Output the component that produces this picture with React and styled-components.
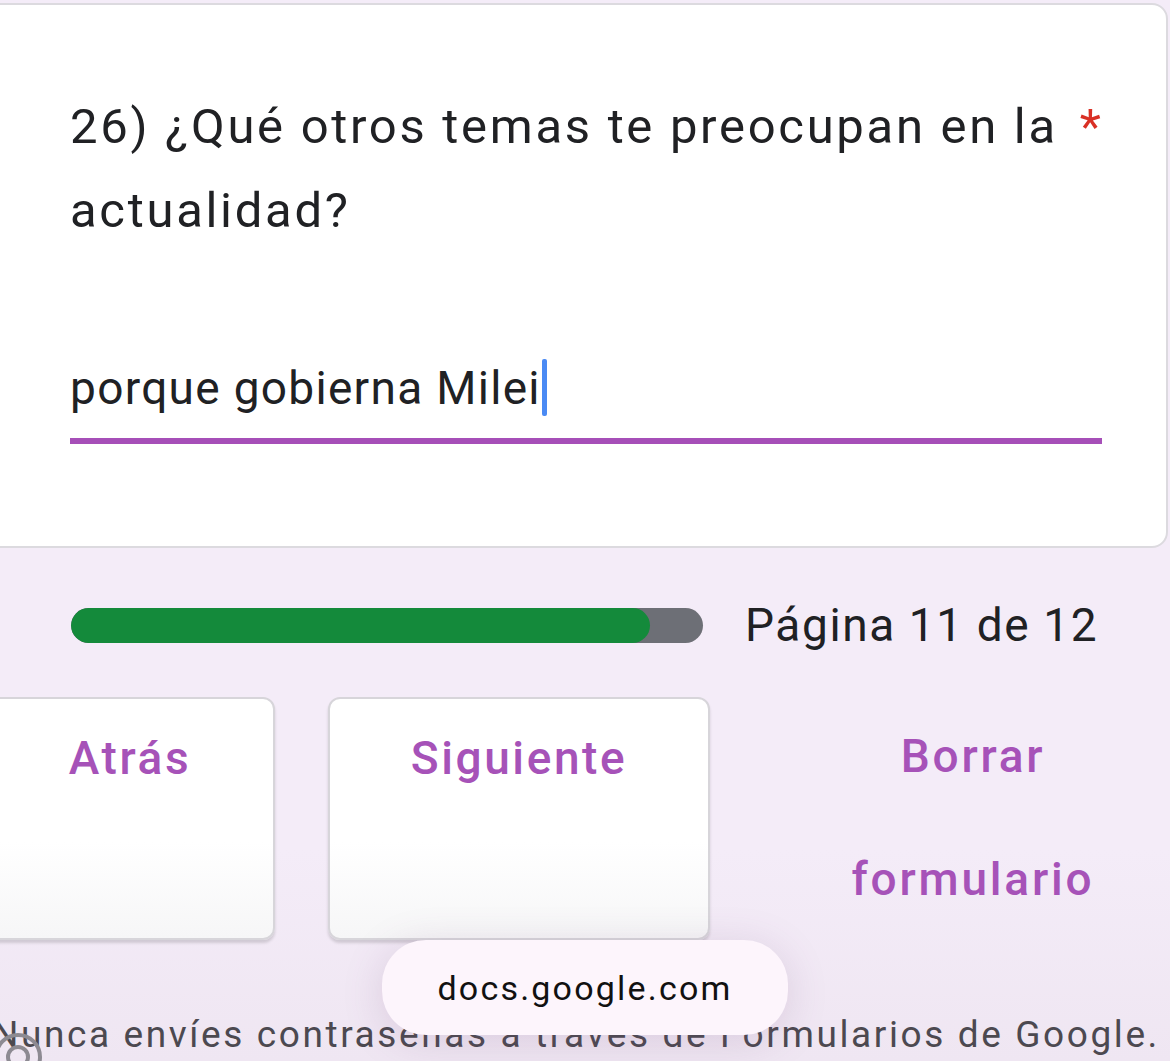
import styled, { createGlobalStyle } from "styled-components"

const GlobalStyle = createGlobalStyle`
  html, body {
    margin: 0;
    padding: 0;
  }
  body {
    font-family: Roboto, "Noto Sans", Arial, sans-serif;
  }
`

function App() {
  const current = 11
  const total = 12
  const done = (current / total) * 100

  return (
    <Page>
      <GlobalStyle />
      <Card>
        <Question>
          26) ¿Qué otros temas te preocupan en la<Required>*</Required>
          <br />
          actualidad?
        </Question>
        <Answer>
          <AnswerText>porque gobierna Milei</AnswerText>
          <Caret />
        </Answer>
      </Card>

      <ProgressRow>
        <Track>
          <Fill style={{ width: `${done}%` }} />
        </Track>
        <PageLabel>Página {current} de {total}</PageLabel>
      </ProgressRow>

      <Buttons>
        <NavButton $width={290}>Atrás</NavButton>
        <NavButton $width={382}>Siguiente</NavButton>
        <ClearButton>
          Borrar
          <br />
          formulario
        </ClearButton>
      </Buttons>

      <Footer>Nunca envíes contraseñas a través de Formularios de Google.</Footer>

      <HelpIcon viewBox="0 0 60 60">
        <circle cx="20" cy="48" r="22" fill="none" stroke="#8d8a92" strokeWidth="4" />
        <circle cx="20" cy="48" r="10" fill="none" stroke="#8d8a92" strokeWidth="4" />
      </HelpIcon>

      <Toast>docs.google.com</Toast>
    </Page>
  )
}

const Page = styled.div`
  position: relative;
  width: 1170px;
  height: 1061px;
  overflow: hidden;
  background: linear-gradient(to bottom, #f4ecf8 0%, #f4ecf8 80%, #efe6f2 100%);
  padding-top: 3px;
  box-sizing: border-box;
`

const Card = styled.div`
  margin-left: -20px;
  width: 1188px;
  height: 545px;
  box-sizing: border-box;
  background: #ffffff;
  border: 2px solid #dcdadf;
  border-radius: 16px;
  padding: 80px 40px 0 88px;
`

const Question = styled.div`
  font-size: 49px;
  line-height: 84px;
  color: #202124;
  letter-spacing: 2.7px;
  white-space: nowrap;
`

const Required = styled.span`
  color: #d93025;
  margin-left: 22px;
  letter-spacing: 0;
`

const Answer = styled.div`
  display: flex;
  align-items: flex-start;
  margin-top: 100px;
  width: 1032px;
  padding-top: 7px;
  box-sizing: border-box;
  border-bottom: 6px solid #a64fb8;
  height: 91px;
`

const AnswerText = styled.span`
  font-size: 46px;
  color: #202124;
  line-height: 56px;
  letter-spacing: 1.3px;
`

const Caret = styled.span`
  display: inline-block;
  width: 5px;
  height: 57px;
  margin-top: -1px;
  margin-left: 1px;
  background: #4a8af4;
  border-radius: 2px;
`

const ProgressRow = styled.div`
  display: flex;
  align-items: center;
  margin-top: 50px;
  padding-left: 71px;
  gap: 42px;
`

const Track = styled.div`
  width: 632px;
  height: 35px;
  background: #6d6f76;
  border-radius: 18px;
  overflow: hidden;
`

const Fill = styled.div`
  height: 100%;
  background: #148a3b;
  border-radius: 18px;
`

const PageLabel = styled.div`
  font-size: 46px;
  color: #202124;
  letter-spacing: 1.6px;
`

const Buttons = styled.div`
  display: flex;
  align-items: flex-start;
  margin-top: 45px;
  margin-left: -15px;
  gap: 53px;
`

const NavButton = styled.div`
  width: ${p => p.$width}px;
  height: 243px;
  box-sizing: border-box;
  background: linear-gradient(to bottom, #ffffff 60%, #f6f6f7 100%);
  border: 2px solid #d7d5da;
  border-radius: 12px;
  box-shadow: 0 3px 3px rgba(0, 0, 0, 0.14);
  padding-top: 32px;
  text-align: center;
  font-size: 46px;
  font-weight: 500;
  letter-spacing: 2.6px;
  color: #a652b8;
`

const ClearButton = styled.div`
  flex: 1;
  padding-top: 24px;
  padding-left: 13px;
  text-align: center;
  font-size: 46px;
  font-weight: 500;
  letter-spacing: 2.8px;
  line-height: 123px;
  color: #a652b8;
  margin-top: -26px;
`

const Footer = styled.div`
  margin-top: 72px;
  margin-left: -8px;
  white-space: nowrap;
  font-size: 37px;
  color: #4c4950;
  letter-spacing: 2.6px;
`

const HelpIcon = styled.svg`
  position: absolute;
  left: -2px;
  bottom: -8px;
  width: 60px;
  height: 60px;
`

const Toast = styled.div`
  position: absolute;
  left: 382px;
  top: 940px;
  width: 406px;
  height: 95px;
  display: flex;
  align-items: center;
  justify-content: center;
  background: #fdf5fc;
  border-radius: 44px;
  box-shadow: 0 6px 40px rgba(120, 80, 130, 0.18);
  font-size: 34px;
  letter-spacing: 2.2px;
  color: #111111;
`

export default App
